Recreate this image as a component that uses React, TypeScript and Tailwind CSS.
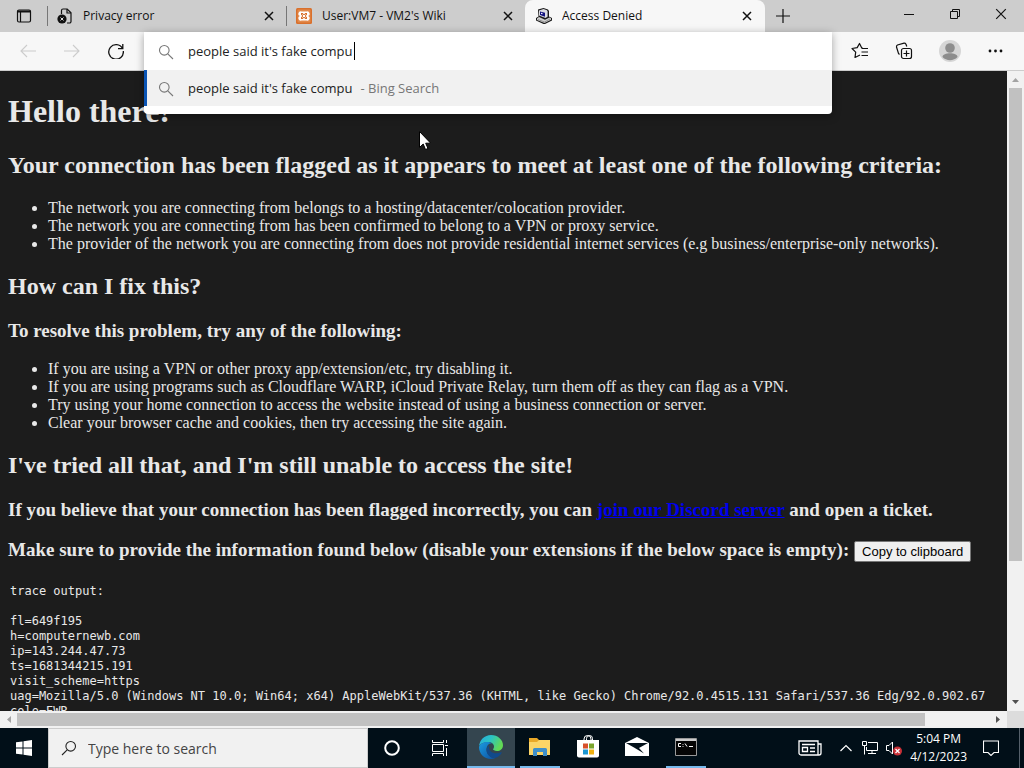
import React from "react";

const ui = "font-['Open_Sans','Noto_Sans',sans-serif]";

function Search({ className }: { className: string }) {
  return (
    <svg viewBox="0 0 16 16" className={className} fill="none" stroke="currentColor" strokeWidth="1.1" aria-hidden="true">
      <circle cx="6.3" cy="6.3" r="4.8" />
      <path d="M9.8 9.8 15 15" />
    </svg>
  );
}

function CloseX({ className }: { className: string }) {
  return (
    <svg viewBox="0 0 10 10" className={className} fill="none" stroke="currentColor" aria-hidden="true">
      <path d="M1 1l8 8M9 1 1 9" />
    </svg>
  );
}

function PageErrorIcon() {
  return (
    <svg viewBox="0 0 16 16" className="size-4 shrink-0" aria-hidden="true">
      <path d="M4.5 6V2.500a1.500 1.500 0 0 1 1.500-1.500H10.200L14 4.800V13.500a1.500 1.500 0 0 1-1.500 1.500H10" fill="none" stroke="#111" strokeWidth="1.200" />
      <path d="M10 1v4h4" fill="none" stroke="#111" strokeWidth="1.200" />
      <circle cx="5" cy="11" r="4.600" fill="#111" />
      <path d="M3.500 9.500l3 3m0-3-3 3" stroke="#ddd" strokeWidth="1" />
    </svg>
  );
}

function XamppIcon() {
  return (
    <svg viewBox="0 0 16 16" className="size-4 shrink-0" aria-hidden="true">
      <rect width="16" height="16" rx="1.500" fill="#d9702c" />
      <rect x="1.500" y="1.500" width="13" height="13" rx="1" fill="#e28a4c" />
      <path d="M5.500 3.500h5a2.300 2.300 0 0 1 1.500 4.500 2.300 2.300 0 0 1-1.500 4.500h-5A2.300 2.300 0 0 1 4 8a2.300 2.300 0 0 1 1.500-4.500Z" fill="#fff" />
      <path d="M5 5h1.800L8 6.500 9.200 5H11v1.700L9.500 8l1.500 1.300V11H9.200L8 9.500 6.800 11H5V9.300L6.500 8 5 6.700Z" fill="#d9702c" />
      <path d="M6.500 6.500l3 3m0-3-3 3" stroke="#fff" strokeWidth="1" />
    </svg>
  );
}

function ComputerIcon() {
  return (
    <svg viewBox="0 0 16 16" className="size-4 shrink-0" aria-hidden="true">
      <path d="M2 1.500 7.500 0 12 1.500 13 3v5.500l3 1.500v2.500L9 16H7.500L0 12.500V10l2.500-1.500Z" fill="#1a1a1a" />
      <path d="M3 2.500 7.500 1l3.500 1.300V9L9.500 10 3 7.500Z" fill="#dcdce2" />
      <path d="M11 2.500l1 .8V8.500l-1 .8Z" fill="#8c8c94" />
      <path d="M4 3.500l5 1.200v4L4 7Z" fill="#12127e" />
      <path d="M5 4.700l1.500.4v1.200L5 6Z" fill="#eef" />
      <path d="M1 10.500 3 9l6 2.700 4.500-2.200 1.500.8v1.500L8.500 15 1 12Z" fill="#cfcfcf" />
      <path d="M2 11.500l6.500 2.500 5.500-3" fill="none" stroke="#777" strokeWidth=".7" />
    </svg>
  );
}

const tabs = [
  { title: "Privacy error", icon: <PageErrorIcon />, active: false },
  { title: "User:VM7 - VM2's Wiki", icon: <XamppIcon />, active: false },
  { title: "Access Denied", icon: <ComputerIcon />, active: true },
];

function TabBar() {
  return (
    <header className="flex h-8 shrink-0 items-stretch bg-[#cdcdcd] text-[#111]">
      <button aria-label="Tab actions" className="flex w-[47px] items-center justify-center">
        <svg viewBox="0 0 16 16" className="size-4" fill="none" stroke="currentColor" strokeWidth="1.200" aria-hidden="true">
          <rect x="1.500" y="2" width="13" height="12" rx="1.500" />
          <path d="M1.500 3.500h13" strokeWidth="2" />
          <path d="M4.500 4v10" strokeWidth="1.200" />
        </svg>
      </button>
      {tabs.map((t) => (
        <div
          key={t.title}
          className={
            t.active
              ? "flex w-60 items-center gap-2.5 rounded-t-lg bg-[#f7f7f7] px-[11px]"
              : "relative flex w-[239px] items-center gap-2.5 px-2.5 before:absolute before:top-1.5 before:left-0 before:h-5 before:w-px before:bg-[#777]"
          }
        >
          {t.icon}
          <span className="flex-1 truncate text-xs">{t.title}</span>
          <button aria-label={"Close " + t.title} className="p-0.5">
            <CloseX className="size-2.5 stroke-[1.5]" />
          </button>
        </div>
      ))}
      <button aria-label="New tab" className="flex w-9 items-center justify-center">
        <svg viewBox="0 0 14 14" className="size-3.5" stroke="currentColor" strokeWidth="1.200" aria-hidden="true"><path d="M7 0v14M0 7h14" /></svg>
      </button>
      <div className="ml-auto flex items-center pb-1">
        <button aria-label="Minimize" className="flex w-[46px] justify-center"><svg viewBox="0 0 10 10" className="size-2.5" stroke="currentColor"><path d="M0 5.500h10" /></svg></button>
        <button aria-label="Restore" className="flex w-[46px] justify-center"><svg viewBox="0 0 10 10" className="size-2.5" fill="none" stroke="currentColor"><path d="M.5 2.500h7v7h-7zM2.500 2.500v-2h7v7h-2" /></svg></button>
        <button aria-label="Close window" className="flex w-[46px] justify-center"><CloseX className="size-3" /></button>
      </div>
    </header>
  );
}

function Toolbar() {
  return (
    <div className="relative z-10 flex h-[39px] shrink-0 items-center border-b border-[#ccc] bg-[#f7f7f7] text-[#111]">
      <div className="flex items-center gap-7 pl-5">
        {["M7 2 1 8l6 6M1 8h15", "M9 2l6 6-6 6M0 8h15"].map((d, i) => (
          <button key={d} disabled aria-label={i ? "Forward" : "Back"} className="text-[#ccc]">
            <svg viewBox="0 0 16 16" className="size-4" fill="none" stroke="currentColor" strokeWidth="1.100"><path d={d} /></svg>
          </button>
        ))}
        <button aria-label="Refresh">
          <svg viewBox="0 0 16 16" className="size-4" fill="none" stroke="currentColor" strokeWidth="1.300"><path d="M14.500 5.500A7.300 7.300 0 1 0 15.300 8M14.800 1v4.700H10" /></svg>
        </button>
      </div>
      <div className="absolute top-0 right-[192px] left-36 rounded-b bg-white pb-2 shadow-[0_2px_8px_rgba(0,0,0,0.35)]">
        <div className="flex h-[38px] items-center gap-3.5 pt-0.5 pl-3.5 text-[#777]">
          <Search className="size-4" />
          <div className="relative flex-1">
            <input aria-label="Address and search bar" defaultValue="people said it's fake compu" className="block w-full bg-transparent text-[13px] text-[#222] outline-none" />
            <span className="absolute top-0 left-[166px] h-[18px] w-px bg-black" />
          </div>
        </div>
        <button className="flex h-9 w-full items-center gap-3.5 border-l-[3px] border-[#0b55b5] bg-[#f1f1f1] pt-0.5 pl-[11px] text-left text-[13px] text-[#777]">
          <Search className="size-4" />
          <span className="flex gap-2">
            <span className="text-[#222]">people said it's fake compu</span>
            <span>- Bing Search</span>
          </span>
        </button>
      </div>
      <div className="ml-auto flex items-center gap-[26px] pr-[21px]">
        <button aria-label="Favorites">
          <svg viewBox="0 0 18 18" className="size-[18px]" fill="none" stroke="currentColor" strokeWidth="1.200" strokeLinejoin="round"><path d="M11.500 6 10.500 5.500 8.500 1.500 6.200 5.600 1 6.500l3.700 3.700-.7 5.300L9 13M10.500 6.500H17M10.500 10H17M10.500 13.500H17" /></svg>
        </button>
        <button aria-label="Collections">
          <svg viewBox="0 0 18 18" className="size-[18px]" fill="none" stroke="currentColor" strokeWidth="1.200"><rect x="6.500" y="6.500" width="10" height="10" rx="2" /><path d="M11.500 8.500v6M8.500 11.500h6M4.500 12.500 3.500 11.500 1.500 5a2 2 0 0 1 1-2L9 1.200a2 2 0 0 1 2 1l.8 2.300" /></svg>
        </button>
        <button aria-label="Profile">
          <svg viewBox="0 0 22 22" className="size-[22px]"><circle cx="11" cy="11" r="11" fill="#d6d6d6" /><circle cx="11" cy="8" r="4.800" fill="#8d8d8d" /><path d="M3.500 17c0-5 15-5 15 0a10.500 10.500 0 0 1-15 0Z" fill="#8d8d8d" /></svg>
        </button>
        <button aria-label="Settings and more"><svg viewBox="0 0 16 4" className="h-1 w-4" fill="currentColor"><circle cx="3" cy="2" r="1.400" /><circle cx="8.500" cy="2" r="1.400" /><circle cx="14" cy="2" r="1.400" /></svg></button>
      </div>
    </div>
  );
}

const trace = `trace output:

fl=649f195
h=computernewb.com
ip=143.244.47.73
ts=1681344215.191
visit_scheme=https
uag=Mozilla/5.0 (Windows NT 10.0; Win64; x64) AppleWebKit/537.36 (KHTML, like Gecko) Chrome/92.0.4515.131 Safari/537.36 Edg/92.0.902.67
colo=EWR`;

const h2 = "my-5 text-2xl/[27px] font-bold";
const h3 = "my-[19px] text-[19px]/[21px] font-bold";
const list = "my-[19px] list-disc pl-10 text-base/[18px]";

function Page() {
  return (
    <main className="min-w-0 flex-1 overflow-hidden bg-[#1c1c1c] px-2 font-['Liberation_Serif','Times_New_Roman',serif] whitespace-nowrap text-[#e8e8e8]">
      <h1 className="my-[22px] text-[32px]/[37px] font-bold">Hello there!</h1>
      <h2 className={h2}>Your connection has been flagged as it appears to meet at least one of the following criteria:</h2>
      <ul className={list}>
        <li>The network you are connecting from belongs to a hosting/datacenter/colocation provider.</li>
        <li>The network you are connecting from has been confirmed to belong to a VPN or proxy service.</li>
        <li>The provider of the network you are connecting from does not provide residential internet services (e.g business/enterprise-only networks).</li>
      </ul>
      <h2 className={h2}>How can I fix this?</h2>
      <h3 className={h3}>To resolve this problem, try any of the following:</h3>
      <ul className={list}>
        <li>If you are using a VPN or other proxy app/extension/etc, try disabling it.</li>
        <li>If you are using programs such as Cloudflare WARP, iCloud Private Relay, turn them off as they can flag as a VPN.</li>
        <li>Try using your home connection to access the website instead of using a business connection or server.</li>
        <li>Clear your browser cache and cookies, then try accessing the site again.</li>
      </ul>
      <h2 className={h2}>I've tried all that, and I'm still unable to access the site!</h2>
      <h3 className={h3}>
        If you believe that your connection has been flagged incorrectly, you can <a href="#discord" className="text-[#0000ee] underline">join our Discord server</a> and open a ticket.
      </h3>
      <h3 className={h3}>
        Make sure to provide the information found below (disable your extensions if the below space is empty):{" "}
        <button className="rounded-[2px] border border-[#767676] bg-[#efefef] px-[7px] align-baseline font-['Liberation_Sans',Arial,sans-serif] text-[13px]/[19px] font-normal text-black">Copy to clipboard</button>
      </h3>
      <pre className="mt-[22px] px-0.5 font-['DejaVu_Sans_Mono',monospace] text-xs/[15px]">{trace}</pre>
    </main>
  );
}

function Arrow({ d, color }: { d: string; color: string }) {
  return <svg viewBox="0 0 17 17" className="size-[17px] shrink-0" aria-hidden="true"><path d={d} fill={color} /></svg>;
}

function EdgeIcon() {
  return (
    <svg viewBox="0 0 24 24" className="size-6" aria-hidden="true">
      <defs>
        <linearGradient id="edgeTop" x1="0" x2="1" y1="0" y2=".4"><stop stopColor="#27a9e0" /><stop offset=".5" stopColor="#2bc3c4" /><stop offset="1" stopColor="#62d955" /></linearGradient>
        <linearGradient id="edgeLow" x1="0" x2="1" y1="0" y2="1"><stop stopColor="#1b9be0" /><stop offset="1" stopColor="#0c4fa0" /></linearGradient>
      </defs>
      <path d="M0 11.500C.5 5 5.500 0 12 0c7 0 12 5 12 10 0 4-3 6-6 6-2.500 0-4-1-4-1.700 0-.6 1-1 1-2.900 0-2.400-2.500-4.400-6-4.400-5 0-8.500 2.500-9 4.500Z" fill="url(#edgeTop)" />
      <path d="M0 12C.8 9 4.500 7 8.500 7c2 0 3.500.6 4.500 1.300C10 8 7.500 11 7.500 14.500c0 4.500 4 9 9 8.500-1.500.7-3 1-4.500 1C5 24 0 18.500 0 12Z" fill="url(#edgeLow)" />
      <path d="M10 10.500c-1.500 1-2.500 2.700-2.500 4.500 0 4.500 4 8.500 8.500 8 3-.8 5.400-2.600 6.800-5.200.2-.4-.2-.7-.6-.5C16 20 9 17.500 10 10.500Z" fill="#114a8b" />
    </svg>
  );
}

const appIcons = [
  { name: "Microsoft Edge", state: "w-12 bg-[#34454f] border-[#76b9ed]", icon: <EdgeIcon /> },
  {
    name: "File Explorer",
    state: "ml-[5px] mr-1 w-10 border-[#76b9ed]",
    icon: (
      <svg viewBox="0 0 24 24" className="size-6" aria-hidden="true">
        <path d="M1 3h8l2 2h11v15H1Z" fill="#e9a928" /><path d="M1 7h8l2-2h11v15H1Z" fill="#fbd567" />
        <path d="M5 21v-6.500a1.500 1.500 0 0 1 1.500-1.500h11a1.500 1.500 0 0 1 1.500 1.500V21h-4v-4H9v4Z" fill="#3e8fc9" />
      </svg>
    ),
  },
  {
    name: "Microsoft Store",
    state: "w-12 border-transparent",
    icon: (
      <svg viewBox="0 0 24 24" className="size-6" aria-hidden="true">
        <path d="M8 8V4a3.500 3.500 0 0 1 7 0v4M10.500 6V3.500a3 3 0 0 1 6 0V6" fill="none" stroke="#fff" strokeWidth="1" />
        <path d="M1 5h22v15.500a2 2 0 0 1-2 2H3a2 2 0 0 1-2-2Z" fill="#fff" />
        <path d="M7 8.500h5v5H7z" fill="#d8512c" /><path d="M13 8.500h5v5h-5z" fill="#7aa52d" /><path d="M7 14.500h5v5H7z" fill="#1b96d2" /><path d="M13 14.500h5v5h-5z" fill="#f0b010" />
      </svg>
    ),
  },
  {
    name: "Mail",
    state: "ml-px w-12 border-transparent",
    icon: (
      <svg viewBox="0 0 24 24" className="size-6" aria-hidden="true">
        <path d="M0 8 12 2l12 6v13H0Z" fill="#fff" /><path d="M1 8h22l-9 5 5 5.500L9 12.500Z" fill="#021019" />
      </svg>
    ),
  },
  {
    name: "Command Prompt",
    state: "ml-[5px] w-10 border-[#76b9ed]",
    icon: (
      <svg viewBox="0 0 24 24" className="size-6" aria-hidden="true">
        <path d="M1.500 3.500h21v17h-21z" fill="#050505" stroke="#999" /><path d="M2 4h20v2H2z" fill="#ccc" />
        <path d="M7 8.500H4.500v3H7M9 9v.8M9 11v.8M11 8.500l2 3M15 11.500h4" fill="none" stroke="#fff" />
      </svg>
    ),
  },
];

function Taskbar() {
  return (
    <footer className="flex h-10 shrink-0 items-stretch bg-[#010f18] text-white">
      <button aria-label="Start" className="flex w-12 items-center justify-center">
        <svg viewBox="0 0 16 16" className="size-4" fill="#fff"><path d="M0 2.300 6.500 1.400v6.100H0ZM7.500 1.200 16 0v7.500H7.500ZM0 8.500h6.500v6.100L0 13.700ZM7.500 8.500H16V16l-8.500-1.200Z" /></svg>
      </button>
      <label className="flex w-80 items-center gap-[11px] border border-[#ccc] bg-[#f1f1f1] pl-3 text-[#222]">
        <Search className="size-4 -scale-x-100" />
        <input type="text" aria-label="Type here to search" placeholder="Type here to search" className="min-w-0 flex-1 bg-transparent pt-0.5 text-sm outline-none placeholder:text-[#444]" />
      </label>
      <button aria-label="Cortana" className="flex w-12 items-center justify-center"><svg viewBox="0 0 16 16" className="size-4"><circle cx="8" cy="8" r="6.800" fill="none" stroke="#fff" strokeWidth="2" /></svg></button>
      <button aria-label="Task View" className="mr-[3px] flex w-12 items-center justify-center">
        <svg viewBox="0 0 16 16" className="size-4" fill="none" stroke="#fff"><path d="M.5 0v2.500h11V0M.5 16v-2.500h11V16M.5 4.500h11v7H.5zM14.500 0v3M14.500 8v8M13 5.500h3" /></svg>
      </button>
      <div className="flex">
        {appIcons.map((a) => (
          <button key={a.name} aria-label={a.name} className={"flex items-center justify-center border-b-2 " + a.state}>{a.icon}</button>
        ))}
      </div>
      <div className="ml-auto flex items-center">
        <button aria-label="News" className="mr-[18px]">
          <svg viewBox="0 0 24 16" className="h-4 w-6" fill="none" stroke="#fff" strokeWidth="1.300"><path d="M1 1h19v14H3a2 2 0 0 1-2-2ZM20 4h3v9a2 2 0 0 1-2 2h-2M4 4.500h13M12 8h5M12 11.500h5" /><path d="M4.500 7.500h5v4h-5z" /></svg>
        </button>
        <button aria-label="Show hidden icons" className="mr-2.5"><svg viewBox="0 0 12 8" className="h-2 w-3" fill="none" stroke="#fff" strokeWidth="1.200"><path d="M.5 7 6 1.500 11.500 7" /></svg></button>
        <button aria-label="Network" className="mr-2"><svg viewBox="0 0 16 14" className="h-3.5 w-4" fill="none" stroke="#fff"><path d="M6 1.500h9.500v8H4.500V6M.5.500h4v4h-4zM2.500 4.500v9M10 9.500v3M6 12.500h8" /></svg></button>
        <button aria-label="Volume muted" className="mr-2"><svg viewBox="0 0 16 16" className="size-4"><path d="M.5 5.500H3L6.500 2v12L3 10.500H.500Z" fill="none" stroke="#fff" /><circle cx="11.500" cy="11" r="4.500" fill="#c93037" /><path d="m9.500 9 4 4m0-4-4 4" stroke="#fff" strokeWidth="1.200" /></svg></button>
        <div className="mr-4 text-center text-xs/[18px]"><div>5:04 PM</div><div>4/12/2023</div></div>
        <button aria-label="Notifications" className="mr-5"><svg viewBox="0 0 16 16" className="size-4" fill="none" stroke="#fff" strokeWidth="1.100"><path d="M.5 1h15v11.500H11L8 15.500l-3-3H.500Z" /></svg></button>
        <div className="h-10 w-[5px] border-l border-[#55606a]" />
      </div>
    </footer>
  );
}

export default function App() {
  return (
    <div className={"flex h-screen flex-col overflow-hidden " + ui}>
      <TabBar />
      <Toolbar />
      <div className="relative flex min-h-0 flex-1">
        <Page />
        <div className="flex w-[17px] shrink-0 flex-col bg-[#f1f1f1]">
          <Arrow d="M5 11h7L8.500 7Z" color="#a3a3a3" />
          <div className="flex-1 px-0.5"><div className="h-[78%] bg-[#c1c1c1]" /></div>
          <Arrow d="M5 6h7L8.500 10Z" color="#505050" />
        </div>
        <svg viewBox="0 0 12 19" className="absolute top-[60px] left-[419px] h-[19px] w-3" aria-hidden="true"><path d="M.5.500v16l3.700-3.500 2.300 5.500 2.500-1-2.300-5.300h5Z" fill="#fff" stroke="#000" /></svg>
      </div>
      <div className="flex h-[17px] shrink-0 bg-[#f1f1f1]">
        <Arrow d="M11 5v7L7 8.500Z" color="#a3a3a3" />
        <div className="flex flex-1 py-0.5"><div className="w-14/15 bg-[#c1c1c1]" /></div>
        <Arrow d="M6 5v7l4-3.500Z" color="#505050" />
        <div className="w-[17px] bg-[#dcdcdc]" />
      </div>
      <Taskbar />
    </div>
  );
}
